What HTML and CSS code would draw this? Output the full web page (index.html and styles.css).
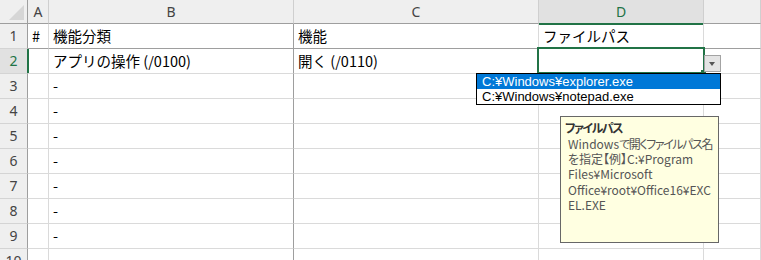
FILE: index.html
```html
<!DOCTYPE html>
<html lang="ja">
<head>
<meta charset="utf-8">
<title>Sheet</title>
<link rel="stylesheet" href="styles.css">
</head>
<body>
  <div class="sheet">
    <div class="grid">
      <div class="corner">
        <svg width="28" height="24" viewBox="0 0 28 24"><polygon points="24,5 24,20 9,20" fill="#d6d6d6"/></svg>
      </div>
      <div class="colhead">A</div>
      <div class="colhead">B</div>
      <div class="colhead">C</div>
      <div class="colhead active">D</div>
      <div class="colhead"></div>

      <div class="rowhead">1</div>
      <div class="cell first">#</div>
      <div class="cell first col-b">機能分類</div>
      <div class="cell first">機能</div>
      <div class="cell first">ファイルパス</div>
      <div class="cell first"></div>

      <div class="rowhead active">2</div>
      <div class="cell"></div>
      <div class="cell col-b">アプリの操作 (/0100)</div>
      <div class="cell">開く (/0110)</div>
      <div class="cell"></div>
      <div class="cell"></div>

      <div class="rowhead">3</div>
      <div class="cell"></div>
      <div class="cell col-b">-</div>
      <div class="cell"></div>
      <div class="cell"></div>
      <div class="cell"></div>

      <div class="rowhead">4</div>
      <div class="cell"></div>
      <div class="cell col-b">-</div>
      <div class="cell"></div>
      <div class="cell"></div>
      <div class="cell"></div>

      <div class="rowhead">5</div>
      <div class="cell"></div>
      <div class="cell col-b">-</div>
      <div class="cell"></div>
      <div class="cell"></div>
      <div class="cell"></div>

      <div class="rowhead">6</div>
      <div class="cell"></div>
      <div class="cell col-b">-</div>
      <div class="cell"></div>
      <div class="cell"></div>
      <div class="cell"></div>

      <div class="rowhead">7</div>
      <div class="cell"></div>
      <div class="cell col-b">-</div>
      <div class="cell"></div>
      <div class="cell"></div>
      <div class="cell"></div>

      <div class="rowhead">8</div>
      <div class="cell"></div>
      <div class="cell col-b">-</div>
      <div class="cell"></div>
      <div class="cell"></div>
      <div class="cell"></div>

      <div class="rowhead">9</div>
      <div class="cell"></div>
      <div class="cell col-b">-</div>
      <div class="cell"></div>
      <div class="cell"></div>
      <div class="cell"></div>

      <div class="rowhead">10</div>
      <div class="cell"></div>
      <div class="cell col-b"></div>
      <div class="cell"></div>
      <div class="cell"></div>
      <div class="cell"></div>
    </div>

    <!-- selected cell D2 -->
    <div class="selection"></div>
    <div class="fill-handle"></div>
    <div class="dd-button"><span class="dd-arrow"></span></div>

    <ul class="dd-list">
      <li class="selected">C:¥Windows¥explorer.exe</li>
      <li>C:¥Windows¥notepad.exe</li>
    </ul>

    <div class="tip">
      <div class="tip-title">ファイルパス</div>
      <div class="tip-body">Windows<span class="kana">で開くファイルパス名</span><br>を指定【例】C:¥Program<br>Files¥Microsoft<br>Office¥root¥Office16¥EXC<br>EL.EXE</div>
    </div>
  </div>
</body>
</html>
```

FILE: styles.css
```css
body {
  margin: 0;
  background-color: #fff;
  overflow: hidden;
}

.sheet {
  position: relative;
  width: 761px;
  height: 260px;
  overflow: hidden;
  font-family: "Noto Sans CJK JP", sans-serif;
}

.grid {
  display: grid;
  grid-template-columns: 28px 21px 245px 245px 165px 57px;
  grid-template-rows: 24px;
  grid-auto-rows: 25px;
}

.grid > div {
  box-sizing: border-box;
  border-right: 1px solid #dadada;
  border-bottom: 1px solid #dadada;
}

.corner {
  background-color: #efefef;
  border-right-color: #9e9e9e !important;
  border-bottom-color: #9e9e9e !important;
}

.corner svg {
  display: block;
}

.colhead {
  background-color: #efefef;
  border-right-color: #cfcfcf !important;
  border-bottom-color: #9e9e9e !important;
  color: #444;
  font-family: "Noto Sans", sans-serif;
  font-size: 14px;
  text-align: center;
  line-height: 23px;
}

.colhead.active {
  background-color: #e1e1e1;
  color: #217346;
  border-bottom: 2px solid #217346 !important;
  margin-bottom: -1px;
}

.rowhead {
  background-color: #efefef;
  border-right-color: #9e9e9e !important;
  border-bottom-color: #d4d4d4 !important;
  color: #444;
  font-family: "Noto Sans", sans-serif;
  font-size: 14px;
  text-align: center;
  line-height: 24px;
}

.rowhead.active {
  background-color: #e1e1e1;
  color: #217346;
  border-right: 2px solid #217346 !important;
  margin-right: -1px;
}

.cell {
  color: #000;
  font-size: 14.5px;
  line-height: 24px;
  padding-left: 4px;
  white-space: nowrap;
  overflow: hidden;
}

.cell.first {
  border-bottom-color: #9e9e9e !important;
}

.cell.col-b {
  border-right-color: #9e9e9e !important;
}

.selection {
  position: absolute;
  left: 537px;
  top: 47px;
  width: 164px;
  height: 23px;
  border: 2px solid #217346;
}

.fill-handle {
  position: absolute;
  left: 701px;
  top: 70px;
  width: 5px;
  height: 5px;
  background-color: #217346;
}

.dd-button {
  position: absolute;
  left: 704px;
  top: 55px;
  width: 15px;
  height: 15px;
  border: 1px solid #a3a3a3;
  background-color: #e4e4e4;
}

.dd-arrow {
  position: absolute;
  left: 4px;
  top: 6px;
  border-left: 3.5px solid transparent;
  border-right: 3.5px solid transparent;
  border-top: 4px solid #555;
}

.dd-list {
  position: absolute;
  left: 476px;
  top: 73px;
  width: 243px;
  margin: 0;
  padding: 0;
  list-style: none;
  border: 1px solid #000;
  background-color: #fff;
  font-family: "Liberation Sans", sans-serif;
  font-size: 13px;
}

.dd-list li {
  height: 15px;
  line-height: 15px;
  padding-left: 5px;
  color: #000;
}

.dd-list li.selected {
  background-color: #0078d7;
  color: #fff;
}

.tip {
  position: absolute;
  left: 560px;
  top: 116px;
  width: 149px;
  height: 121px;
  padding: 2px 4px;
  border: 1px solid #676767;
  background-color: #ffffe1;
  font-size: 12px;
  font-feature-settings: "palt";
}

.tip-title {
  font-weight: bold;
  color: #333;
  line-height: 17px;
  letter-spacing: -1.5px;
}

.tip-body {
  padding-left: 3px;
  color: #555;
  line-height: 15.2px;
  white-space: nowrap;
}

.tip-body .kana {
  letter-spacing: -1.4px;
}
```
